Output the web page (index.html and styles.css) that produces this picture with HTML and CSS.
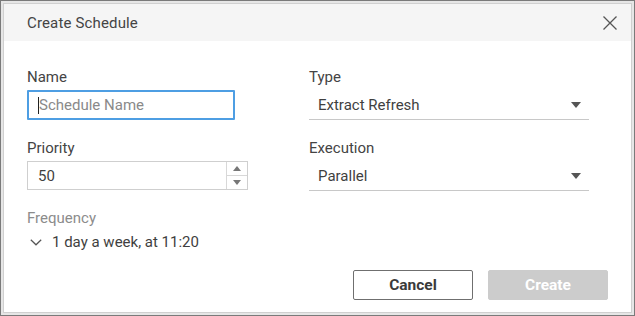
FILE: index.html
```html
<!DOCTYPE html>
<html>
<head>
<meta charset="utf-8">
<link rel="stylesheet" href="styles.css">
</head>
<body>
<div class="frame">
  <div class="dialog">
    <div class="titlebar">
      <span class="title">Create Schedule</span>
      <svg class="close" width="16" height="16" viewBox="0 0 16 16"><path d="M1.5 1.5 L14.5 14.5 M14.5 1.5 L1.5 14.5" stroke="#555" stroke-width="1.3" fill="none"/></svg>
    </div>
    <div class="body">
      <div class="grid">
        <div class="field">
          <div class="label">Name</div>
          <div class="textbox focused"><span class="caret"></span><span class="placeholder">Schedule Name</span></div>
        </div>
        <div class="field">
          <div class="label">Type</div>
          <div class="select"><span class="value">Extract Refresh</span><span class="arrow"></span></div>
        </div>
        <div class="field">
          <div class="label">Priority</div>
          <div class="number">
            <span class="numval">50</span>
            <div class="spin">
              <div class="spinbtn"><span class="tri up"></span></div>
              <div class="spinbtn"><span class="tri down"></span></div>
            </div>
          </div>
        </div>
        <div class="field">
          <div class="label">Execution</div>
          <div class="select"><span class="value">Parallel</span><span class="arrow"></span></div>
        </div>
      </div>
      <div class="freq">
        <div class="label muted">Frequency</div>
        <div class="freqval">
          <svg class="chev" width="12" height="7" viewBox="0 0 12 7"><path d="M0.8 0.8 L6 5.8 L11.2 0.8" stroke="#555" stroke-width="1.2" fill="none"/></svg>
          <span>1 day a week, at 11:20</span>
        </div>
      </div>
      <div class="actions">
        <button class="btn cancel">Cancel</button>
        <button class="btn create">Create</button>
      </div>
    </div>
  </div>
</div>
</body>
</html>
```

FILE: styles.css
```css
* { box-sizing: border-box; }
html, body { margin: 0; padding: 0; }
body {
  font-family: Roboto, "Liberation Sans", Arial, sans-serif;
  color: #3f3f3f;
  background: #e9e9e9;
}
.frame {
  width: 635px;
  height: 316px;
  border: 1px solid #7a7a7a;
  background: #e6e6e6;
  padding: 2px;
}
.dialog {
  width: 100%;
  height: 100%;
  border: 1px solid #d0d0d0;
  background: #fff;
  display: flex;
  flex-direction: column;
}
.titlebar {
  height: 37px;
  background: #f5f5f5;
  display: flex;
  align-items: center;
  justify-content: space-between;
  padding: 0 13px 0 23px;
}
.title {
  font-size: 15px;
  color: #444;
  line-height: 20px;
  letter-spacing: 0.15px;
}
.close { display: block; }
.body {
  padding: 26px 23px 0 23px;
  flex: 1;
  display: flex;
  flex-direction: column;
}
.grid {
  display: grid;
  grid-template-columns: 258px 280px;
  column-gap: 24px;
  row-gap: 18px;
}
.label {
  font-size: 15px;
  line-height: 20px;
  color: #444;
  margin-bottom: 3px;
}
.label.muted { color: #8c8c8c; margin-bottom: 4px; }
.textbox {
  width: 208px;
  height: 30px;
  border: 2px solid #4e9ee3;
  border-radius: 1px;
  display: flex;
  align-items: center;
  padding-left: 9px;
  font-size: 15px;
}
.caret {
  display: inline-block;
  width: 1px;
  height: 17px;
  background: #222;
}
.placeholder { color: #8a8a8a; }
.select {
  height: 30px;
  border-bottom: 1px solid #c8c8c8;
  display: flex;
  align-items: center;
  justify-content: space-between;
  padding: 0 8px 0 9px;
  font-size: 15px;
  color: #3f3f3f;
}
.arrow {
  width: 0;
  height: 0;
  border-left: 5px solid transparent;
  border-right: 5px solid transparent;
  border-top: 6px solid #555;
}
.number {
  width: 221px;
  height: 29px;
  border: 1px solid #cfcfcf;
  display: flex;
  align-items: center;
  font-size: 15px;
}
.numval { flex: 1; padding-left: 10px; }
.spin {
  width: 21px;
  height: 100%;
  border-left: 1px solid #d8d8d8;
  display: flex;
  flex-direction: column;
}
.spinbtn {
  flex: 1;
  display: flex;
  align-items: center;
  justify-content: center;
}
.spinbtn + .spinbtn { border-top: 1px solid #d8d8d8; }
.tri {
  width: 0;
  height: 0;
  border-left: 4px solid transparent;
  border-right: 4px solid transparent;
}
.tri.up { border-bottom: 5px solid #777; }
.tri.down { border-top: 5px solid #777; }
.freq { margin-top: 17px; }
.freqval {
  display: flex;
  align-items: center;
  font-size: 15px;
  line-height: 20px;
  padding-left: 3px;
  color: #3f3f3f;
}
.chev { margin-right: 10px; display: block; }
.actions {
  margin-top: 18px;
  display: flex;
  justify-content: flex-end;
  gap: 15px;
}
.btn {
  width: 120px;
  height: 30px;
  font-family: Roboto, "Liberation Sans", Arial, sans-serif;
  font-size: 15.5px;
  font-weight: bold;
  border-radius: 2px;
  padding: 0;
}
.cancel {
  background: #fff;
  border: 1px solid #6f6f6f;
  color: #3a3a3a;
}
.create {
  background: #cccccc;
  border: 1px solid #cccccc;
  color: #fff;
}
```
